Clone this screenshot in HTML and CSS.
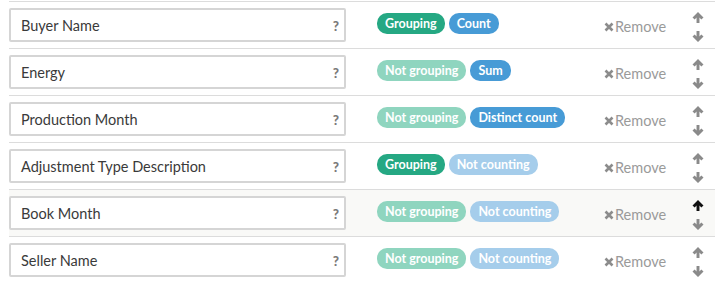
FILE: index.html
```html
<!DOCTYPE html>
<html lang="en">
<head>
  <meta charset="UTF-8">
  <title>Fields</title>
  <link rel="stylesheet" href="styles.css">
</head>
<body>
  <div class="fields">

    <div class="field-row">
      <div class="field-box"><span class="field-name">Buyer Name</span><span class="help">?</span></div>
      <div class="badges">
        <span class="badge group-on">Grouping</span>
        <span class="badge count-on">Count</span>
      </div>
      <a class="remove"><svg class="x-icon" viewBox="0 0 10 10"><path d="M1.5 1.5 L8.5 8.5 M8.5 1.5 L1.5 8.5"/></svg>Remove</a>
      <div class="moves">
        <svg class="arrow" viewBox="0 0 12 12"><path d="M6 0 L12 6 L9.6 8.2 L7.6 6 V12 H4.4 V6 L2.4 8.2 L0 6 Z"/></svg>
        <svg class="arrow down" viewBox="0 0 12 12"><path d="M6 0 L12 6 L9.6 8.2 L7.6 6 V12 H4.4 V6 L2.4 8.2 L0 6 Z"/></svg>
      </div>
    </div>

    <div class="field-row">
      <div class="field-box"><span class="field-name">Energy</span><span class="help">?</span></div>
      <div class="badges">
        <span class="badge group-off">Not grouping</span>
        <span class="badge count-on">Sum</span>
      </div>
      <a class="remove"><svg class="x-icon" viewBox="0 0 10 10"><path d="M1.5 1.5 L8.5 8.5 M8.5 1.5 L1.5 8.5"/></svg>Remove</a>
      <div class="moves">
        <svg class="arrow" viewBox="0 0 12 12"><path d="M6 0 L12 6 L9.6 8.2 L7.6 6 V12 H4.4 V6 L2.4 8.2 L0 6 Z"/></svg>
        <svg class="arrow down" viewBox="0 0 12 12"><path d="M6 0 L12 6 L9.6 8.2 L7.6 6 V12 H4.4 V6 L2.4 8.2 L0 6 Z"/></svg>
      </div>
    </div>

    <div class="field-row">
      <div class="field-box"><span class="field-name">Production Month</span><span class="help">?</span></div>
      <div class="badges">
        <span class="badge group-off">Not grouping</span>
        <span class="badge count-on">Distinct count</span>
      </div>
      <a class="remove"><svg class="x-icon" viewBox="0 0 10 10"><path d="M1.5 1.5 L8.5 8.5 M8.5 1.5 L1.5 8.5"/></svg>Remove</a>
      <div class="moves">
        <svg class="arrow" viewBox="0 0 12 12"><path d="M6 0 L12 6 L9.6 8.2 L7.6 6 V12 H4.4 V6 L2.4 8.2 L0 6 Z"/></svg>
        <svg class="arrow down" viewBox="0 0 12 12"><path d="M6 0 L12 6 L9.6 8.2 L7.6 6 V12 H4.4 V6 L2.4 8.2 L0 6 Z"/></svg>
      </div>
    </div>

    <div class="field-row">
      <div class="field-box"><span class="field-name">Adjustment Type Description</span><span class="help">?</span></div>
      <div class="badges">
        <span class="badge group-on">Grouping</span>
        <span class="badge count-off">Not counting</span>
      </div>
      <a class="remove"><svg class="x-icon" viewBox="0 0 10 10"><path d="M1.5 1.5 L8.5 8.5 M8.5 1.5 L1.5 8.5"/></svg>Remove</a>
      <div class="moves">
        <svg class="arrow" viewBox="0 0 12 12"><path d="M6 0 L12 6 L9.6 8.2 L7.6 6 V12 H4.4 V6 L2.4 8.2 L0 6 Z"/></svg>
        <svg class="arrow down" viewBox="0 0 12 12"><path d="M6 0 L12 6 L9.6 8.2 L7.6 6 V12 H4.4 V6 L2.4 8.2 L0 6 Z"/></svg>
      </div>
    </div>

    <div class="field-row hover">
      <div class="field-box"><span class="field-name">Book Month</span><span class="help">?</span></div>
      <div class="badges">
        <span class="badge group-off">Not grouping</span>
        <span class="badge count-off">Not counting</span>
      </div>
      <a class="remove"><svg class="x-icon" viewBox="0 0 10 10"><path d="M1.5 1.5 L8.5 8.5 M8.5 1.5 L1.5 8.5"/></svg>Remove</a>
      <div class="moves">
        <svg class="arrow active" viewBox="0 0 12 12"><path d="M6 0 L12 6 L9.6 8.2 L7.6 6 V12 H4.4 V6 L2.4 8.2 L0 6 Z"/></svg>
        <svg class="arrow down" viewBox="0 0 12 12"><path d="M6 0 L12 6 L9.6 8.2 L7.6 6 V12 H4.4 V6 L2.4 8.2 L0 6 Z"/></svg>
      </div>
    </div>

    <div class="field-row">
      <div class="field-box"><span class="field-name">Seller Name</span><span class="help">?</span></div>
      <div class="badges">
        <span class="badge group-off">Not grouping</span>
        <span class="badge count-off">Not counting</span>
      </div>
      <a class="remove"><svg class="x-icon" viewBox="0 0 10 10"><path d="M1.5 1.5 L8.5 8.5 M8.5 1.5 L1.5 8.5"/></svg>Remove</a>
      <div class="moves">
        <svg class="arrow" viewBox="0 0 12 12"><path d="M6 0 L12 6 L9.6 8.2 L7.6 6 V12 H4.4 V6 L2.4 8.2 L0 6 Z"/></svg>
        <svg class="arrow down" viewBox="0 0 12 12"><path d="M6 0 L12 6 L9.6 8.2 L7.6 6 V12 H4.4 V6 L2.4 8.2 L0 6 Z"/></svg>
      </div>
    </div>

  </div>
</body>
</html>
```

FILE: styles.css
```css
body {
  margin: 0;
  font-family: Lato, "Open Sans", sans-serif;
  background: #fff;
  color: #333;
}
.fields {
  margin: 1px 9px 0 9px;
}
.field-row {
  display: flex;
  align-items: center;
  border-top: 1px solid #dcdcdc;
  padding: 6px 0;
}
.field-row.hover {
  background: #f9f9f7;
}
.field-box {
  width: 337px;
  height: 34px;
  box-sizing: border-box;
  border: 2px solid #d5d5d5;
  border-radius: 2px;
  background: #fff;
  display: flex;
  align-items: center;
  justify-content: space-between;
  padding: 0 5px 0 10px;
}
.field-name {
  font-size: 14.5px;
  color: #3a3a3a;
}
.help {
  font-size: 13.5px;
  font-weight: 900;
  color: #7a7a7a;
  margin-top: 1px;
}
.badges {
  width: 227px;
  margin-left: 31px;
  display: flex;
  gap: 4px;
  align-self: flex-start;
  margin-top: 5px;
}
.badge {
  height: 21px;
  line-height: 21px;
  padding: 0 8px;
  border-radius: 10px;
  color: #fff;
  font-size: 12.5px;
  font-weight: bold;
}
.group-on { background: #25a883; }
.group-off { background: #8fd5bf; }
.count-on { background: #479bd6; }
.count-off { background: #a5cdeb; }
.remove {
  display: flex;
  align-items: center;
  width: 75px;
  margin-top: 3px;
  font-size: 14.5px;
  color: #9a9a9a;
}
.x-icon {
  width: 10px;
  height: 10px;
  stroke: #8c8c8c;
  stroke-width: 2.6;
  margin-right: 1px;
}
.moves {
  display: flex;
  flex-direction: column;
  gap: 8px;
  align-self: flex-start;
  margin-left: 13px;
  margin-top: 4px;
}
.arrow {
  width: 12px;
  height: 11px;
  fill: #8a8a8a;
}
.arrow.down {
  transform: rotate(180deg);
}
.arrow.active {
  fill: #111;
}
```
